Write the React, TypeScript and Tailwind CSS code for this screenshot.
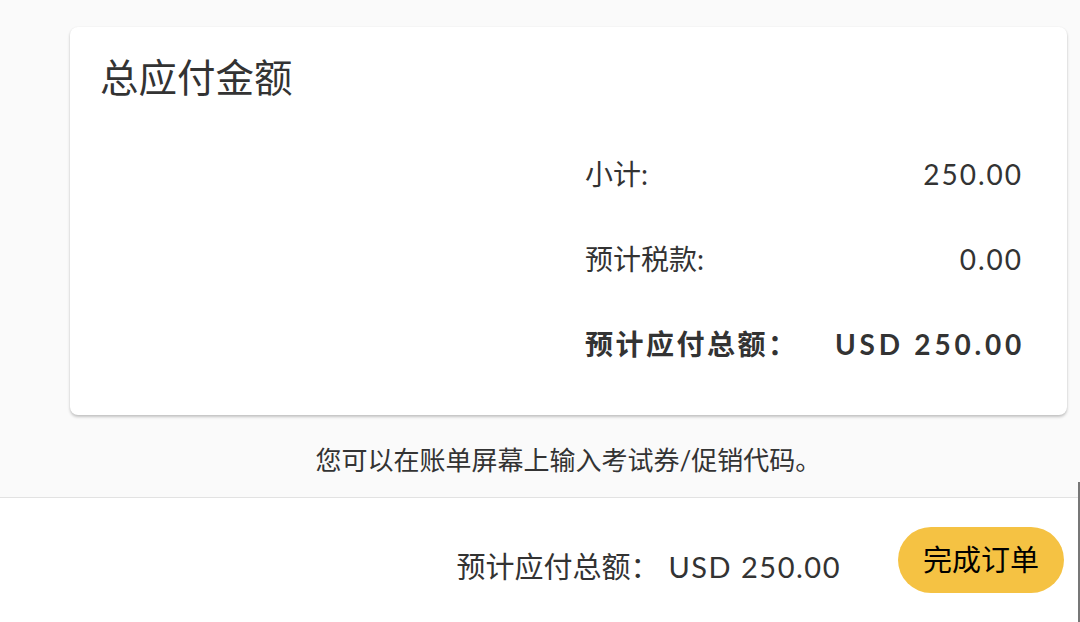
import React from "react";

const font = { fontFamily: 'Lato, "Noto Sans CJK SC", sans-serif' };

function Row({ label, value, bold }: { label: string; value: string; bold?: boolean }) {
  return (
    <div className={`flex h-[85px] items-center justify-between text-[28px] text-[#333] ${bold ? "font-bold" : ""}`}>
      <span className={bold ? "tracking-[2.5px]" : ""}>{label}</span>
      <span className={bold ? "mr-[-4px] tracking-[3.8px]" : "mr-[-2px] tracking-[2px]"}>{value}</span>
    </div>
  );
}

export default function App() {
  return (
    <div className="relative flex h-[622px] w-[1080px] flex-col overflow-hidden bg-[#fafafa]" style={font}>
      <div className="pl-[70px] pr-[13px] pt-[27px]">
        <div className="h-[388px] rounded-lg bg-white pl-[30px] pr-[46px] pt-[26px] shadow-[0_2px_3px_rgba(0,0,0,0.22),0_0_2px_rgba(0,0,0,0.06)]">
          <h1 className="h-[48px] text-[38.5px] leading-[48px] text-[#333]">总应付金额</h1>
          <div className="ml-auto mt-[30px] w-[436px]">
            <Row label="小计:" value="250.00" />
            <Row label="预计税款:" value="0.00" />
            <Row label="预计应付总额：" value="USD 250.00" bold />
          </div>
        </div>
      </div>

      <div className="h-[82px] pl-[70px] pr-[13px] pt-[30px] text-center text-[26px] leading-[30px] text-[#333]">
        您可以在账单屏幕上输入考试券/促销代码。
      </div>

      <div className="flex flex-1 items-center justify-end gap-[57px] border-t border-[#e2e2e2] bg-white pr-[16px]">
        <span className="mt-[14px] text-[29px] text-[#333]">
          预计应付总额：<span className="tracking-[1.5px]"> USD 250.00</span>
        </span>
        <button className="h-[66px] w-[166px] rounded-full bg-[#f5c243] text-[29px] text-black">完成订单</button>
      </div>

      <div className="absolute bottom-0 right-0 h-[140px] w-[2px] bg-[#777]" />
    </div>
  );
}
